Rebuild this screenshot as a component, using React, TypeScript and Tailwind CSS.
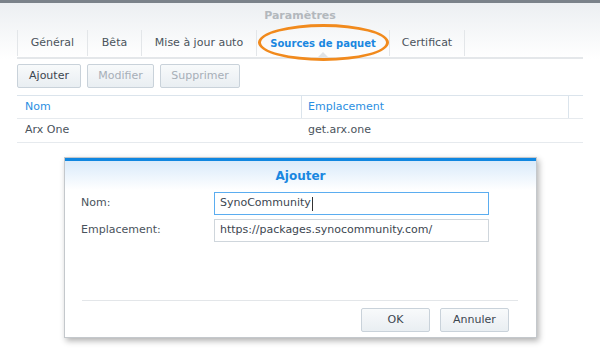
const tabs = [
  { label: "Général", w: "w-[70px]" },
  { label: "Bêta", w: "w-[54px]" },
  { label: "Mise à jour auto", w: "w-[115px]" },
  { label: "Sources de paquet", w: "w-[133px]", active: true },
  { label: "Certificat", w: "w-[76px]" },
];

const btn =
  "h-[24px] rounded-[2px] border border-[#c9d2da] bg-gradient-to-b from-[#f8fafb] to-[#e9eef2] text-[11px]";

const App = () => {
  return (
    <div className="relative w-[600px] h-[351px] overflow-hidden bg-white font-['DejaVu_Sans',sans-serif] text-[11px] text-[#404a54]">
      {/* window top */}
      <div className="h-[3px] bg-[#7b828a]" />
      <div className="bg-gradient-to-b from-[#eceff2] to-white">
        <div className="h-[26px] flex items-center justify-center font-bold text-[#b3b8bd]">
          Paramètres
        </div>

        {/* tabs */}
        <div className="mx-[17px] flex h-[30px] border-b-2 border-[#e4e7ea]">
          {tabs.map((t, i) => (
            <div
              key={t.label}
              className={`relative ${t.w} flex items-center justify-center border-l border-[#e3e6e9] ${
                i === tabs.length - 1 ? "border-r" : ""
              } my-[1px] ${t.active ? "font-bold text-[10px] text-[#1a87e0]" : "text-[#4a535c]"}`}
            >
              {t.label}
              {t.active && (
                <div className="absolute bottom-[-1px] left-1/2 -translate-x-1/2 w-0 h-0 border-x-[5px] border-x-transparent border-b-[5px] border-b-[#dfe3e7]" />
              )}
            </div>
          ))}
        </div>
      </div>

      {/* toolbar */}
      <div className="mx-[17px] mt-[5px] flex gap-[6px]">
        <button className={`${btn} w-[64px] text-[#3c4650]`}>Ajouter</button>
        <button className={`${btn} w-[67px] text-[#a7afb7]`}>Modifier</button>
        <button className={`${btn} w-[80px] text-[#a7afb7]`}>Supprimer</button>
      </div>

      {/* table */}
      <div className="mx-[17px] mt-[7px] border-t border-[#dbe4ec]">
        <div className="flex h-[23px] border-b border-[#e6eaee] text-[#2b8fe2]">
          <div className="w-[284px] pl-[8px] flex items-center">Nom</div>
          <div className="w-[267px] pl-[6px] flex items-center border-l border-[#dbe4ec]">
            Emplacement
          </div>
          <div className="flex-1 border-l border-[#dbe4ec]" />
        </div>
        <div className="flex h-[24px] border-b border-[#e6eaee] text-[#4a535c]">
          <div className="w-[284px] pl-[8px] flex items-center">Arx One</div>
          <div className="pl-[7px] flex items-center">get.arx.one</div>
        </div>
      </div>

      {/* annotation ellipse */}
      <div className="absolute left-[258px] top-[24px] w-[131px] h-[37px] rounded-[50%] border-[3px] border-[#f18a1d]" />

      {/* dialog */}
      <div className="absolute left-[64px] top-[157px] w-[473px] h-[181px] bg-white border border-[#c4c8cc] shadow-[2px_3px_6px_rgba(0,0,0,0.3)] flex flex-col">
        <div className="h-[3px] bg-[#0f86e0]" />
        <div className="h-[29px] bg-gradient-to-b from-[#d9eafa] to-white flex items-center justify-center font-bold text-[12px] text-[#1a87e0]">
          Ajouter
        </div>
        <div className="pl-[16px] pt-[2px] flex flex-col gap-[4px]">
          <div className="flex items-center h-[23px]">
            <div className="w-[133px] text-[#4a535c]">Nom:</div>
            <div className="w-[275px] h-[23px] border border-[#5badf0] flex items-center pl-[5px] text-[#3c4650]">
              SynoCommunity
              <span className="ml-[1px] inline-block w-[1px] h-[14px] bg-[#333]" />
            </div>
          </div>
          <div className="flex items-center h-[23px]">
            <div className="w-[133px] text-[#4a535c]">Emplacement:</div>
            <div className="w-[275px] h-[23px] border border-[#cfd6dc] flex items-center pl-[5px] text-[#3c4650]">
              https://packages.synocommunity.com/
            </div>
          </div>
        </div>
        <div className="mt-[58px] mx-[17px] mr-[18px] border-t border-[#e3e6e9]" />
        <div className="mt-[7px] flex justify-end gap-[10px] pr-[27px]">
          <button className={`${btn} w-[69px] text-[#3c4650]`}>OK</button>
          <button className={`${btn} w-[69px] text-[#3c4650]`}>Annuler</button>
        </div>
      </div>
    </div>
  );
};

export default App;
